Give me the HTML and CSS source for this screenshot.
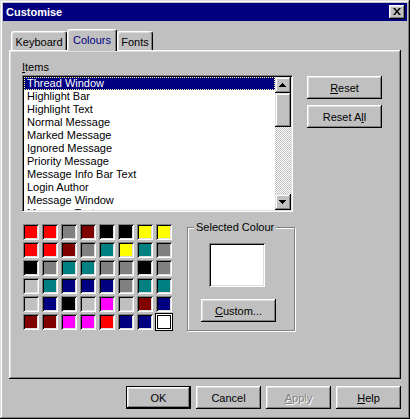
FILE: index.html
```html
<!DOCTYPE html>
<html>
<head>
<meta charset="utf-8">
<title>Customise</title>
<link rel="stylesheet" href="styles.css">
</head>
<body>
<div class="window">
  <div class="titlebar">
    <span class="title">Customise</span>
    <button class="close" aria-label="Close"><svg width="8" height="7" viewBox="0 0 8 7"><path d="M0 0h2l2 2.5L6 0h2L5 3.5 8 7H6L4 4.5 2 7H0l3-3.5z" fill="#000"/></svg></button>
  </div>
  <div class="tabs">
    <div class="tab tab-kb">Keyboard</div>
    <div class="tab tab-active">Colours</div>
    <div class="tab tab-fonts">Fonts</div>
  </div>
  <div class="panel">
    <div class="label"><u>I</u>tems</div>
    <div class="items-row">
      <div class="listbox">
        <ul class="list">
          <li class="sel">Thread Window</li>
          <li>Highlight Bar</li>
          <li>Highlight Text</li>
          <li>Normal Message</li>
          <li>Marked Message</li>
          <li>Ignored Message</li>
          <li>Priority Message</li>
          <li>Message Info Bar Text</li>
          <li>Login Author</li>
          <li>Message Window</li>
          <li>Message Text</li>
        </ul>
        <div class="scrollbar">
          <div class="sb-btn"><svg width="7" height="4" viewBox="0 0 7 4"><path d="M3 0h1v1h1v1h1v1h1v1H0V3h1V2h1V1h1z" fill="#000"/></svg></div>
          <div class="sb-thumb"></div>
          <div class="sb-track"></div>
          <div class="sb-btn"><svg width="7" height="4" viewBox="0 0 7 4"><path d="M0 0h7v1H6v1H5v1H4v1H3V3H2V2H1V1H0z" fill="#000"/></svg></div>
        </div>
      </div>
      <div class="side-buttons">
        <button class="btn"><u>R</u>eset</button>
        <button class="btn">Reset A<u>l</u>l</button>
      </div>
    </div>
    <div class="colour-row">
      <div class="grid">
        <span class="sw red"></span><span class="sw red"></span><span class="sw gray"></span><span class="sw maroon"></span><span class="sw black"></span><span class="sw black"></span><span class="sw yellow"></span><span class="sw yellow"></span>
        <span class="sw red"></span><span class="sw red"></span><span class="sw maroon"></span><span class="sw gray"></span><span class="sw teal"></span><span class="sw yellow"></span><span class="sw teal"></span><span class="sw gray"></span>
        <span class="sw black"></span><span class="sw gray"></span><span class="sw teal"></span><span class="sw teal"></span><span class="sw gray"></span><span class="sw gray"></span><span class="sw black"></span><span class="sw gray"></span>
        <span class="sw silver"></span><span class="sw teal"></span><span class="sw navy"></span><span class="sw navy"></span><span class="sw navy"></span><span class="sw gray"></span><span class="sw teal"></span><span class="sw teal"></span>
        <span class="sw silver"></span><span class="sw navy"></span><span class="sw black"></span><span class="sw silver"></span><span class="sw magenta"></span><span class="sw silver"></span><span class="sw maroon"></span><span class="sw navy"></span>
        <span class="sw maroon"></span><span class="sw maroon"></span><span class="sw magenta"></span><span class="sw magenta"></span><span class="sw red"></span><span class="sw navy"></span><span class="sw navy"></span><span class="sw white selected"></span>
      </div>
      <div class="group">
        <span class="legend">Selected Colour</span>
        <div class="preview"></div>
        <button class="btn btn-custom"><u>C</u>ustom...</button>
      </div>
    </div>
  </div>
  <div class="footer">
    <button class="btn btn-foot btn-default">OK</button>
    <button class="btn btn-foot">Cancel</button>
    <button class="btn btn-foot btn-disabled"><u>A</u>pply</button>
    <button class="btn btn-foot"><u>H</u>elp</button>
  </div>
</div>
</body>
</html>
```
FILE: styles.css
```css
* { box-sizing: border-box; }

body {
  margin: 0;
  background: #c0c0c0;
  font: 11px "Liberation Sans", Arial, sans-serif;
  color: #000;
}

.window {
  width: 410px;
  height: 419px;
  padding: 3px;
  background: #c0c0c0;
  box-shadow: inset -1px -1px #000, inset 1px 1px #dfdfdf, inset -2px -2px #808080, inset 2px 2px #fff;
}

.titlebar {
  height: 18px;
  background: #000080;
  color: #fff;
  font-weight: bold;
  display: flex;
  align-items: center;
  justify-content: space-between;
  padding: 0 2px 0 3px;
  line-height: 18px;
}

.close {
  width: 16px;
  height: 14px;
  padding: 0;
  border: none;
  background: #c0c0c0;
  display: flex;
  align-items: center;
  justify-content: center;
  box-shadow: inset -1px -1px #000, inset 1px 1px #fff, inset -2px -2px #808080, inset 2px 2px #dfdfdf;
}

.close svg { display: block; margin: 0 0 1px 0; }

.tabs {
  display: flex;
  align-items: flex-end;
  height: 21px;
  margin: 8px 0 0 6px;
  padding-left: 2px;
}

.tab {
  height: 19px;
  border-top: 1px solid #fff;
  border-left: 1px solid #fff;
  border-right: 1px solid #000;
  border-radius: 3px 3px 0 0;
  box-shadow: inset -1px 0 #808080, inset 1px 1px #dfdfdf;
  padding-top: 2px;
  line-height: 16px;
  text-align: center;
  background: #c0c0c0;
}

.tab-kb { width: 56px; }
.tab-fonts { width: 36px; }

.tab-active {
  width: 50px;
  height: 22px;
  margin-bottom: -1px;
  position: relative;
  z-index: 1;
  color: #000080;
}

.panel {
  margin-left: 6px;
  width: 392px;
  height: 329px;
  padding: 11px 13px 0 13px;
  box-shadow: inset -1px -1px #000, inset 1px 1px #fff, inset -2px -2px #808080, inset 2px 2px #dfdfdf;
}

.label {
  line-height: 13px;
  height: 13px;
}

.items-row {
  display: flex;
  align-items: flex-start;
  gap: 14px;
  margin-top: 1px;
}

.listbox {
  width: 271px;
  height: 137px;
  border: 1px solid;
  border-color: #808080 #fff #fff #808080;
  padding: 1px;
  box-shadow: inset 1px 1px #000, inset -1px -1px #dfdfdf;
  background: #fff;
  display: flex;
}

.list {
  list-style: none;
  margin: 0;
  padding: 0;
  flex: 1;
  height: 133px;
  overflow: hidden;
}

.list li {
  height: 13px;
  line-height: 13px;
  padding-left: 3px;
  white-space: nowrap;
}

.list li.sel {
  background: #000080;
  color: #fff;
  outline: 1px dotted #ffffa0;
  outline-offset: -1px;
}

.scrollbar {
  width: 16px;
  height: 133px;
  display: flex;
  flex-direction: column;
}

.sb-btn {
  height: 16px;
  background: #c0c0c0;
  display: flex;
  align-items: center;
  justify-content: center;
  box-shadow: inset -1px -1px #000, inset 1px 1px #dfdfdf, inset -2px -2px #808080, inset 2px 2px #fff;
}

.sb-btn svg { display: block; margin-right: 1px; }

.sb-thumb {
  height: 34px;
  background: #c0c0c0;
  box-shadow: inset -1px -1px #000, inset 1px 1px #dfdfdf, inset -2px -2px #808080, inset 2px 2px #fff;
}

.sb-track {
  flex: 1;
  background: repeating-conic-gradient(#fff 0 25%, #c0c0c0 0 50%) 0 0 / 2px 2px;
}

.side-buttons {
  display: flex;
  flex-direction: column;
  gap: 6px;
  margin-top: 1px;
}

.btn {
  width: 75px;
  height: 23px;
  padding: 0;
  border: none;
  background: #c0c0c0;
  font: inherit;
  color: #000;
  box-shadow: inset -1px -1px #000, inset 1px 1px #fff, inset -2px -2px #808080, inset 2px 2px #dfdfdf;
}

.colour-row {
  display: flex;
  align-items: flex-start;
  gap: 15px;
  margin-top: 12px;
}

.grid {
  display: grid;
  grid-template-columns: repeat(8, 16px);
  grid-auto-rows: 16px;
  column-gap: 3px;
  row-gap: 2px;
  margin-left: 1px;
}

.sw {
  display: block;
  box-shadow: inset 1px 1px #808080, inset -1px -1px #fff, inset 2px 2px #000, inset -2px -2px #dfdfdf;
}

.red { background: #ff0000; }
.gray { background: #808080; }
.maroon { background: #800000; }
.black { background: #000; }
.yellow { background: #ffff00; }
.teal { background: #008080; }
.silver { background: #c0c0c0; }
.navy { background: #000080; }
.magenta { background: #ff00ff; }
.white { background: #fff; }

.sw.selected {
  box-shadow: 0 0 0 1px #000, inset 0 0 0 1px #fff, inset 0 0 0 2px #000;
}

.group {
  position: relative;
  width: 108px;
  height: 104px;
  margin-top: 3px;
  border: 1px solid #808080;
  box-shadow: inset 1px 1px #fff, 1px 1px #fff;
  padding-top: 15px;
  display: flex;
  flex-direction: column;
  align-items: flex-start;
}

.legend {
  position: absolute;
  top: -7px;
  left: 6px;
  padding: 0 2px;
  line-height: 13px;
  background: #c0c0c0;
}

.preview {
  width: 56px;
  height: 44px;
  margin-left: 21px;
  background: #fff;
  box-shadow: inset 1px 1px #808080, inset -1px -1px #fff, inset 2px 2px #000, inset -2px -2px #dfdfdf;
}

.btn-custom {
  margin: 12px 0 0 13px;
}

.footer {
  display: flex;
  justify-content: flex-end;
  gap: 5px;
  width: 392px;
  margin: 7px 0 0 6px;
}

.btn-foot { width: 65px; }

.btn-default {
  box-shadow: inset 0 0 0 1px #000, inset -2px -2px #000, inset 2px 2px #fff, inset -3px -3px #808080, inset 3px 3px #dfdfdf;
}

.btn-disabled {
  color: #808080;
  text-shadow: 1px 1px #fff;
}
```
